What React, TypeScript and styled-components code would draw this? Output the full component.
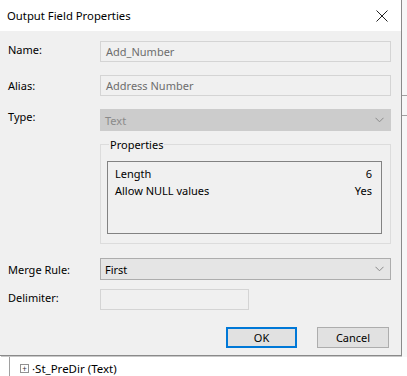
import React from "react";
import styled, { createGlobalStyle } from "styled-components";

const GlobalStyle = createGlobalStyle`
  html, body {
    margin: 0;
    padding: 0;
    background: #ffffff;
  }
  body {
    font-family: "Noto Sans", "Open Sans", sans-serif;
    font-size: 11px;
    color: #000;
  }
`;

const Screen = styled.div`
  width: 407px;
  height: 376px;
  overflow: hidden;
  display: flex;
  flex-direction: column;
  background: #ffffff;
`;

const TopArea = styled.div`
  display: flex;
  height: 357px;
`;

const Dialog = styled.div`
  width: 402px;
  height: 356px;
  box-sizing: border-box;
  border-right: 1px solid #8a8a8a;
  border-bottom: 1px solid #8a8a8a;
  display: flex;
  flex-direction: column;
  background: #f0f0f0;
  box-shadow: 1px 1px 0 #c8c8c8;
`;

const TitleBar = styled.div`
  height: 31px;
  background: #ffffff;
  display: flex;
  align-items: center;
  justify-content: space-between;
  padding: 0 12px 0 7px;
`;

const Title = styled.div`
  font-size: 11.3px;
  color: #000;
`;

const CloseButton = styled.div`
  width: 14px;
  height: 14px;
  display: flex;
  align-items: center;
  justify-content: center;
`;

const Body = styled.div`
  flex: 1;
  padding: 10px 10px 0 8px;
  display: flex;
  flex-direction: column;
`;

const FieldRow = styled.div<{ $mt?: number }>`
  display: grid;
  grid-template-columns: 92px 1fr;
  align-items: center;
  margin-top: ${(p) => p.$mt ?? 0}px;
`;

const Label = styled.div<{ $raise?: number }>`
  font-size: 11px;
  color: #000;
  position: relative;
  top: ${(p) => -(p.$raise ?? 0)}px;
`;

const TextBox = styled.div<{ $width?: number }>`
  height: 21px;
  box-sizing: border-box;
  width: ${(p) => (p.$width ? `${p.$width}px` : "100%")};
  border: 1px solid #d4d4d4;
  background: #f0f0f0;
  color: #6d6d6d;
  font-size: 11px;
  display: flex;
  align-items: center;
  padding-left: 5px;
`;

const Combo = styled.div<{ $disabled?: boolean }>`
  height: 22px;
  box-sizing: border-box;
  border: 1px solid ${(p) => (p.$disabled ? "#cccccc" : "#adadad")};
  background: ${(p) => (p.$disabled ? "#cccccc" : "#e5e5e5")};
  color: ${(p) => (p.$disabled ? "#8a8a8a" : "#000")};
  font-size: 11px;
  display: flex;
  align-items: center;
  justify-content: space-between;
  padding: 0 6px 0 4px;
`;

const GroupBox = styled.div`
  margin-top: 13px;
  height: 100px;
  box-sizing: border-box;
  border: 1px solid #dcdcdc;
  padding: 0 8px 9px 6px;
  display: flex;
  flex-direction: column;
`;

const GroupTitle = styled.div`
  font-size: 11px;
  margin: -8px 0 9px 2px;
  padding: 0 1px;
  line-height: 15px;
  background: #f0f0f0;
  align-self: flex-start;
`;

const ListBox = styled.div`
  flex: 1;
  border: 1px solid #828282;
  background: #f0f0f0;
  padding: 3px 9px 0 7px;
  display: flex;
  flex-direction: column;
`;

const PropRow = styled.div`
  display: flex;
  justify-content: space-between;
  font-size: 11px;
  line-height: 17px;
`;

const ButtonRow = styled.div`
  display: flex;
  justify-content: flex-end;
  gap: 20px;
  margin-top: 17px;
  padding-right: 2px;
`;

const Button = styled.div<{ $primary?: boolean }>`
  width: ${(p) => (p.$primary ? "71px" : "72px")};
  height: 21px;
  box-sizing: border-box;
  border: ${(p) => (p.$primary ? "2px solid #0078d7" : "1px solid #adadad")};
  background: #e1e1e1;
  font-size: 11px;
  display: flex;
  align-items: center;
  justify-content: center;
`;

const RightStrip = styled.div`
  flex: 1;
  display: flex;
  flex-direction: column;
  background: #f7f7f7;
`;

const StripLine = styled.div<{ $at: number }>`
  height: 1px;
  background: #a0a0a0;
  margin-top: ${(p) => p.$at}px;
`;

const TreeArea = styled.div`
  flex: 1;
  display: flex;
  padding-left: 9px;
`;

const TreeLine = styled.div`
  width: 1px;
  background: #a0a0a0;
`;

const TreeItem = styled.div`
  display: flex;
  align-items: center;
  gap: 3px;
  padding: 3px 0 0 10px;
  font-size: 11.5px;
  color: #000;
  height: 16px;
`;

const Expander = styled.div`
  width: 7px;
  height: 7px;
  border: 1px solid #919191;
  display: flex;
  align-items: center;
  justify-content: center;
  font-size: 8px;
  line-height: 7px;
  color: #333;
`;

const Chevron = () => (
  <svg width="9" height="6" viewBox="0 0 9 6">
    <path d="M0.5 0.8 L4.5 4.8 L8.5 0.8" fill="none" stroke="#8a8a8a" strokeWidth="1" />
  </svg>
);

const App: React.FC = () => {
  return (
    <>
      <GlobalStyle />
      <Screen>
        <TopArea>
          <Dialog>
            <TitleBar>
              <Title>Output Field Properties</Title>
              <CloseButton>
                <svg width="12" height="12" viewBox="0 0 12 12">
                  <path d="M0.5 0.5 L11.5 11.5 M11.5 0.5 L0.5 11.5" stroke="#222" strokeWidth="1" />
                </svg>
              </CloseButton>
            </TitleBar>
            <Body>
              <FieldRow>
                <Label $raise={2}>Name:</Label>
                <TextBox>Add_Number</TextBox>
              </FieldRow>
              <FieldRow $mt={13}>
                <Label>Alias:</Label>
                <TextBox>Address Number</TextBox>
              </FieldRow>
              <FieldRow $mt={13}>
                <Label $raise={4}>Type:</Label>
                <Combo $disabled>
                  <span>Text</span>
                  <Chevron />
                </Combo>
              </FieldRow>
              <FieldRow>
                <div />
                <GroupBox>
                  <GroupTitle>Properties</GroupTitle>
                  <ListBox>
                    <PropRow>
                      <span>Length</span>
                      <span>6</span>
                    </PropRow>
                    <PropRow>
                      <span>Allow NULL values</span>
                      <span>Yes</span>
                    </PropRow>
                  </ListBox>
                </GroupBox>
              </FieldRow>
              <FieldRow $mt={14}>
                <Label>Merge Rule:</Label>
                <Combo>
                  <span>First</span>
                  <Chevron />
                </Combo>
              </FieldRow>
              <FieldRow $mt={9}>
                <Label $raise={2}>Delimiter:</Label>
                <TextBox $width={149} />
              </FieldRow>
              <ButtonRow>
                <Button $primary>OK</Button>
                <Button>Cancel</Button>
              </ButtonRow>
            </Body>
          </Dialog>
          <RightStrip>
            <StripLine $at={95} />
            <StripLine $at={19} />
          </RightStrip>
        </TopArea>
        <TreeArea>
          <TreeLine />
          <TreeItem>
            <Expander>+</Expander>
            <span>·St_PreDir (Text)</span>
          </TreeItem>
        </TreeArea>
      </Screen>
    </>
  );
};

export default App;
